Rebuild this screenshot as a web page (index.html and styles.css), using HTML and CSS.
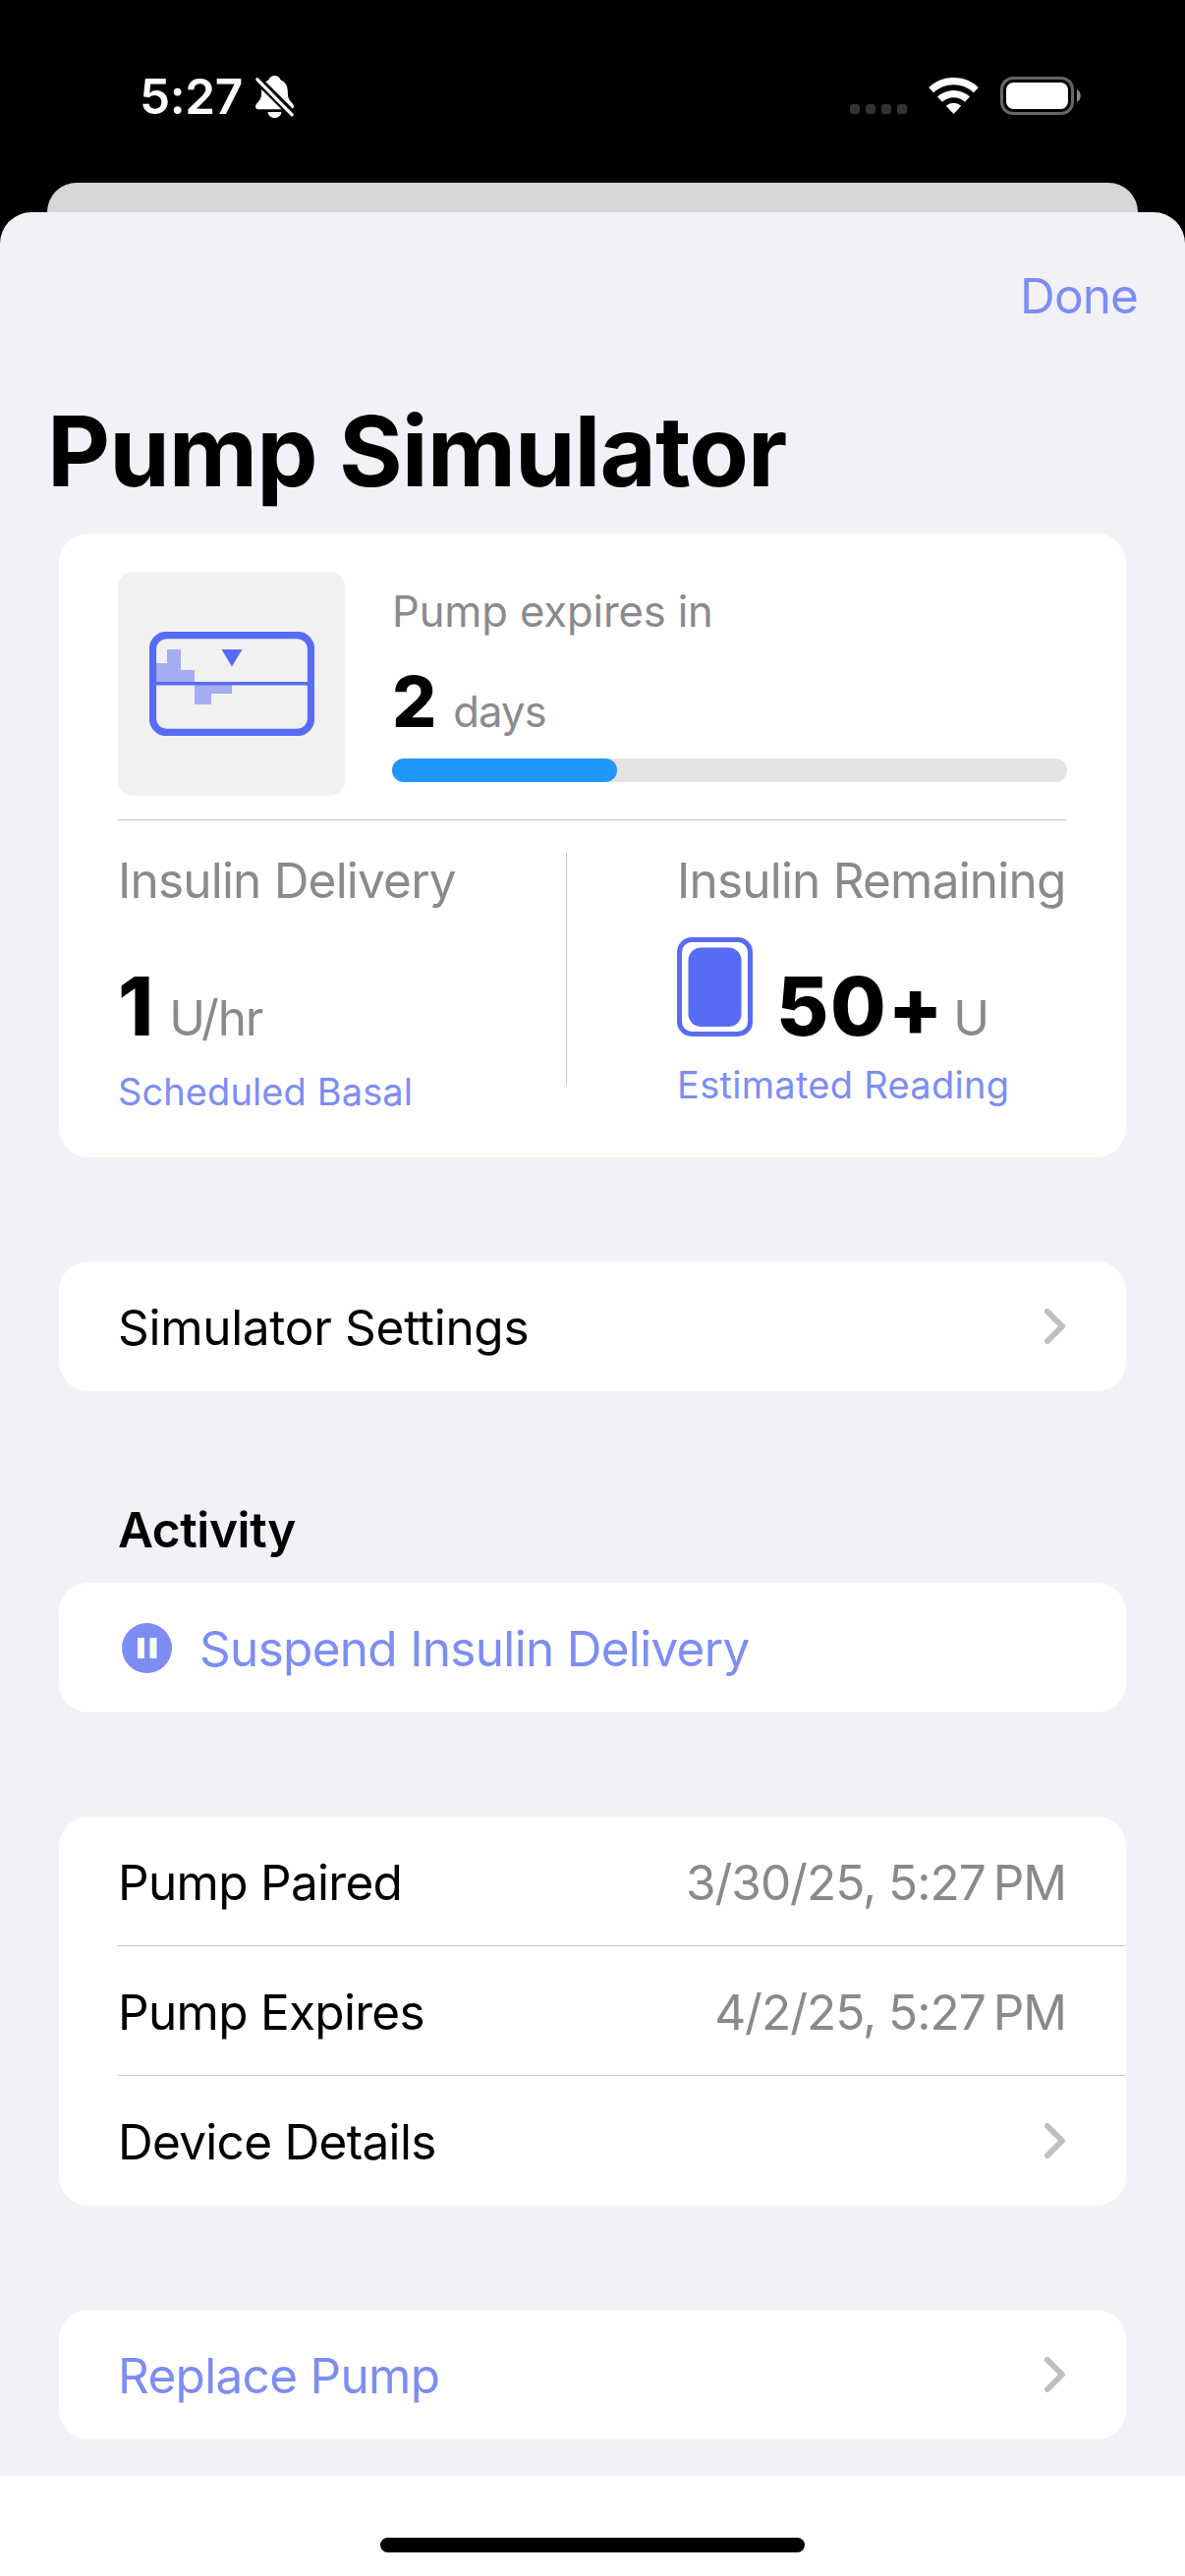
FILE: index.html
```html
<!doctype html>
<html lang="en">

<head>
	<meta charset="utf-8">
	<title>Pump Simulator</title>
	<link rel="stylesheet" href="styles.css">
</head>

<body>
	<header class="status">
		<span class="time">5:27</span>
		<svg class="bell" width="39" height="43" viewBox="0 0 39 43">
			<path fill="#fff" d="M19.500 0c-3 0-5.300 1.700-6 4.300C8.500 6.500 6.300 10.500 6.200 16c-.1 6-.8 7.800-3.600 11C.8 29 0 30.200 0 31.600 0 33.200 1.200 34.300 3 34.300h33c1.800 0 3-1.100 3-2.700 0-1.400-.8-2.600-2.600-4.600-2.800-3.200-3.500-5-3.600-11-.1-5.500-2.300-9.500-7.300-11.700C24.800 1.700 22.500 0 19.500 0zM12.500 37h14c-.3 3.600-3.200 6-7 6s-6.700-2.400-7-6z"/>
			<path stroke="#000" stroke-width="8.500" d="M-2-.2l43 43"/>
			<path stroke="#fff" stroke-width="3.200" stroke-linecap="round" d="M1.900 3.800l35.300 36"/>
		</svg>
		<div class="signal"><i></i><i></i><i></i><i></i></div>
		<svg class="wifi" width="51" height="37" viewBox="0 0 51 37">
			<g fill="none" stroke="#fff" stroke-width="7.300">
				<path d="M2.600 12.700a33.400 33.400 0 0 1 45.800 0"/>
				<path d="M11.500 22.200a20.400 20.400 0 0 1 28 0"/>
			</g>
			<path fill="#fff" d="M25.500 37l-7.700-8.200a11.500 11.500 0 0 1 15.400 0z"/>
		</svg>
		<svg class="battery" width="82" height="39" viewBox="0 0 82 39">
			<rect x="1.500" y="1.500" width="72" height="36" rx="11.500" fill="none" stroke="#666" stroke-width="3"/>
			<rect x="6" y="6" width="63" height="27" rx="7.500" fill="#fff"/>
			<path fill="#888" d="M78 13c5 2.500 5 10.500 0 13z"/>
		</svg>
	</header>

	<div class="behind"></div>

	<main class="sheet">
		<nav class="nav">Done</nav>
		<h1>Pump Simulator</h1>

		<section class="card summary">
			<div class="expiry">
				<div class="thumb">
					<svg width="168" height="106" viewBox="0 0 168 106">
						<path fill="#a4adf2" d="M7 51V32h11V18h14v21h14v12zM46 51h38v12H63v11H46z"/>
						<rect x="3.500" y="3.500" width="161" height="99" rx="14" fill="none" stroke="#576cf5" stroke-width="7.300"/>
						<path stroke="#576cf5" stroke-width="3.500" d="M7 52.800h154"/>
						<path fill="#576cf5" d="M73.500 18h21L84 35.500z"/>
					</svg>
				</div>
				<div class="expiry-info">
					<p class="expiry-label">Pump expires in</p>
					<p class="expiry-value">2<span>days</span></p>
					<div class="bar"><div class="bar-fill"></div></div>
				</div>
			</div>
			<div class="stats">
				<div class="stat delivery">
					<p class="stat-label">Insulin Delivery</p>
					<p class="stat-value">1<span>U/hr</span></p>
					<p class="stat-note">Scheduled Basal</p>
				</div>
				<div class="stat remaining">
					<p class="stat-label">Insulin Remaining</p>
					<div class="reservoir">
						<svg width="77" height="101" viewBox="0 0 77 101">
							<rect x="2.500" y="2.500" width="72" height="96" rx="12.500" fill="none" stroke="#576cf5" stroke-width="5"/>
							<rect x="11.500" y="10.500" width="54" height="80.500" rx="13" fill="#576cf5"/>
						</svg>
						<p class="stat-value">50+<span>U</span></p>
					</div>
					<p class="stat-note">Estimated Reading</p>
				</div>
			</div>
		</section>

		<section class="card gap">
			<div class="row">
				<span class="settings">Simulator Settings</span>
				<svg class="chevron" width="21" height="36" viewBox="0 0 21 36"><path d="M3 3l15 15L3 33"/></svg>
			</div>
		</section>

		<h2>Activity</h2>
		<section class="card">
			<div class="row link">
				<svg class="pause" width="51" height="51" viewBox="0 0 51 51">
					<circle cx="25.500" cy="25.500" r="25.500" fill="#7d8df5"/>
					<path fill="#fff" d="M17 15h5a1 1 0 0 1 1 1v19a1 1 0 0 1-1 1h-5a1 1 0 0 1-1-1V16a1 1 0 0 1 1-1zM29.500 15h5a1 1 0 0 1 1 1v19a1 1 0 0 1-1 1h-5a1 1 0 0 1-1-1V16a1 1 0 0 1 1-1z"/>
				</svg>
				<span>Suspend Insulin Delivery</span>
			</div>
		</section>

		<section class="card gap">
			<div class="row">
				<span>Pump Paired</span>
				<span class="date">3/30/25, 5:27<b></b>PM</span>
			</div>
			<div class="row">
				<span>Pump Expires</span>
				<span class="date">4/2/25, 5:27<b></b>PM</span>
			</div>
			<div class="row">
				<span>Device Details</span>
				<svg class="chevron" width="21" height="36" viewBox="0 0 21 36"><path d="M3 3l15 15L3 33"/></svg>
			</div>
		</section>

		<section class="card gap">
			<div class="row link">
				<span>Replace Pump</span>
				<svg class="chevron" width="21" height="36" viewBox="0 0 21 36"><path d="M3 3l15 15L3 33"/></svg>
			</div>
		</section>
	</main>

	<footer class="home"><div class="home-bar"></div></footer>
</body>

</html>
```

FILE: styles.css
```css
* {
	box-sizing: border-box;
	margin: 0;
	padding: 0;
}

body {
	width: 1206px;
	height: 2622px;
	overflow: hidden;
	background: #000;
	color: #000;
	font-family: Inter, "Liberation Sans", sans-serif;
	font-size: 49.5px;
	line-height: 60px;
	white-space: nowrap;
}

svg {
	display: block;
	flex: none;
}

/* status bar */
.status {
	display: flex;
	align-items: flex-start;
	height: 186px;
	padding: 77px 106px 0 142px;
	color: #fff;
}

.time {
	width: 118px;
	margin-top: -9px;
	font-weight: 600;
	letter-spacing: -0.3px;
}

.signal {
	display: flex;
	gap: 6px;
	margin: 29px 22px 0 auto;
}

.signal i {
	width: 10px;
	height: 10px;
	border-radius: 3px;
	background: #333;
}

.wifi {
	margin: 2px 22px 0 0;
}

.battery {
	margin-top: 1px;
}

/* sheets */
.behind {
	height: 60px;
	margin: 0 48px -30px;
	border-radius: 30px 30px 0 0;
	background: #d7d7d7;
}

.sheet {
	position: relative;
	height: 2304px;
	padding: 0 60px;
	border-radius: 32px 32px 0 0;
	background: #f2f1f7;
}

.nav {
	height: 170px;
	margin-right: -12px;
	line-height: 170px;
	text-align: right;
	letter-spacing: -0.9px;
	color: #7d8df5;
}

h1 {
	height: 146px;
	margin: 0 0 11px -12px;
	font-size: 99px;
	font-weight: 700;
	line-height: 146px;
	letter-spacing: -1px;
}

h2 {
	height: 195px;
	padding: 87px 60px 0;
	font-size: 49.5px;
	font-weight: 600;
	line-height: 108px;
	letter-spacing: -0.4px;
}

.card {
	border-radius: 30px;
	background: #fff;
}

.gap {
	margin-top: 106px;
}

/* pump summary */
.summary {
	height: 635px;
	padding: 39px 60px 0;
}

.expiry {
	display: flex;
	height: 253px;
	border-bottom: 1px solid #c6c6c8;
}

.thumb {
	display: flex;
	align-items: center;
	justify-content: center;
	width: 231px;
	height: 228px;
	margin-right: 48px;
	border-radius: 15px;
	background: #f1f1f1;
}

.expiry-info {
	flex: 1;
}

.expiry-label {
	font-size: 43.5px;
	line-height: 80px;
	letter-spacing: -0.1px;
	color: #8a8a8e;
}

.expiry-value {
	height: 104px;
	margin-bottom: 6px;
	font-size: 71px;
	font-weight: 800;
	line-height: 104px;
}

.expiry-value span {
	margin-left: 17px;
	font-size: 43.5px;
	font-weight: 400;
	line-height: 1;
	letter-spacing: -0.8px;
	color: #8a8a8e;
}

.bar {
	height: 24px;
	border-radius: 12px;
	background: #e4e4e4;
}

.bar-fill {
	width: 33.33%;
	height: 24px;
	border-radius: 12px;
	background: #2196fd;
}

.stats {
	display: flex;
}

.stat {
	flex: none;
}

.delivery {
	width: 456px;
}

/* divider between the two readings */
.remaining {
	padding-left: 113px;
	background: linear-gradient(#c6c6c8, #c6c6c8) no-repeat 0 33px / 1px 237px;
}

.stat-label {
	line-height: 122px;
	letter-spacing: -0.8px;
	color: #8a8a8e;
}

.stat-value {
	height: 135px;
	font-size: 82px;
	font-weight: 800;
	line-height: 135px;
}

.stat-value span {
	margin-left: 16px;
	font-size: 49.5px;
	font-weight: 400;
	line-height: 1;
	letter-spacing: -1.2px;
	color: #8a8a8e;
}

.stat-note {
	font-size: 38px;
	line-height: 39px;
	letter-spacing: 0.1px;
	color: #7d8df5;
}

.remaining .stat-note {
	line-height: 24px;
	letter-spacing: 0.3px;
}

.reservoir {
	display: flex;
}

.reservoir svg {
	margin: -3px 24px 0 0;
}

.reservoir .stat-value {
	letter-spacing: 1.6px;
}

.reservoir .stat-value span {
	margin-left: 9px;
}

/* list rows */
.row {
	display: flex;
	align-items: center;
	height: 132px;
	margin-left: 60px;
	padding-right: 60px;
	letter-spacing: -0.7px;
}

.row:not(:last-child) {
	background: linear-gradient(#c6c6c8, #c6c6c8) no-repeat 0 100% / 100% 1px;
}

.row span {
	padding-top: 2px;
}

.row .settings {
	letter-spacing: -0.3px;
}

.link {
	color: #7d8df5;
}

.chevron {
	margin: 0 2px 0 auto;
	fill: none;
	stroke: #bfbfbf;
	stroke-width: 6;
	stroke-linecap: round;
	stroke-linejoin: round;
}

.pause {
	margin: 0 28px 0 4px;
}

.row .date {
	margin: 0 1px 0 auto;
	letter-spacing: -1px;
	color: #8a8a8e;
}

.date b {
	display: inline-block;
	width: 8px;
}

/* home indicator */
.home {
	height: 102px;
	padding-top: 63px;
	background: #fff;
}

.home-bar {
	width: 432px;
	height: 15px;
	margin: 0 auto;
	border-radius: 8px;
	background: #000;
}
```
